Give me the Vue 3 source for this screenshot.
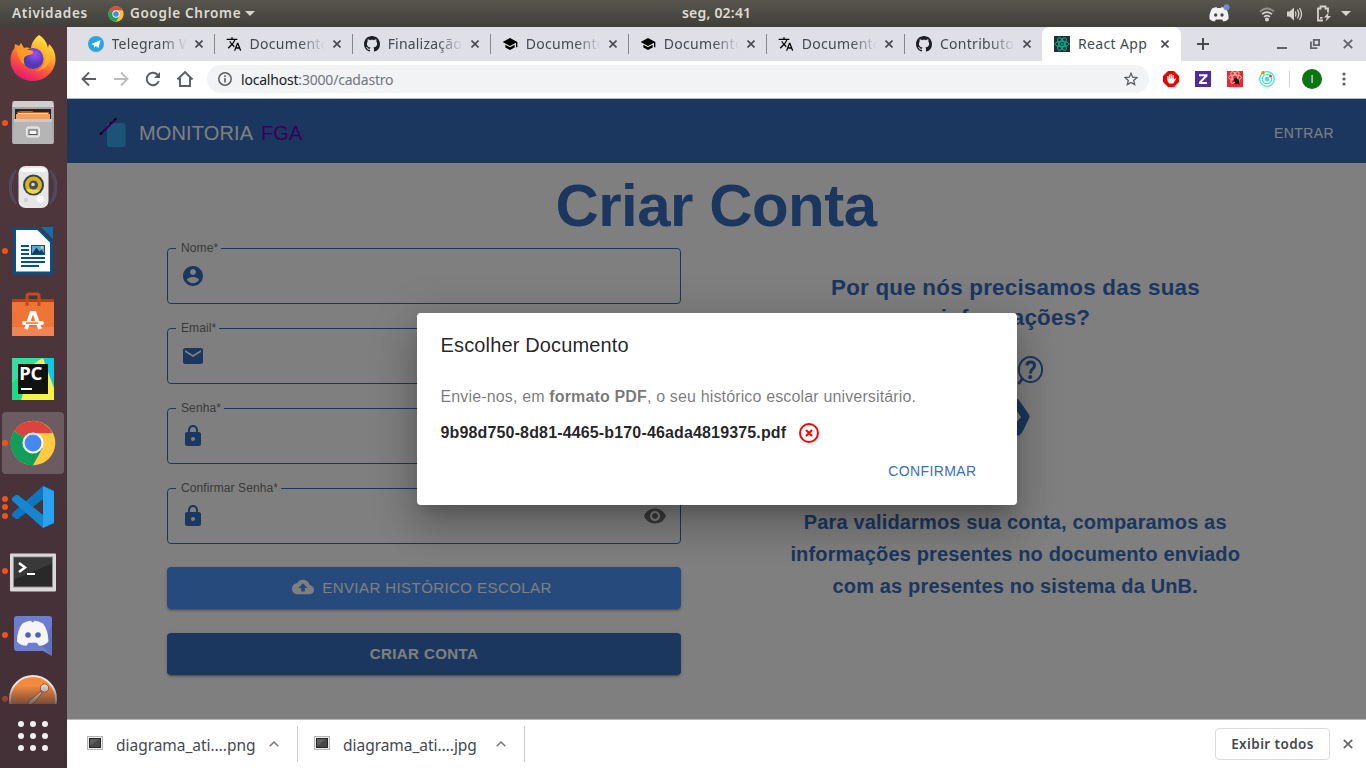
<script setup>
const tabs = [
  { title: 'Telegram Web', icon: 'telegram', spacing: '0.3px' },
  { title: 'Documentos', icon: 'translate', spacing: '0.3px' },
  { title: 'Finalização d', icon: 'github', spacing: '0.2px' },
  { title: 'Documentos', icon: 'school', spacing: '0.3px' },
  { title: 'Documentos', icon: 'school', spacing: '0.3px' },
  { title: 'Documentos', icon: 'translate', spacing: '0.3px' },
  { title: 'Contributors', icon: 'github', spacing: '0.3px' },
  { title: 'React App', icon: 'react', active: true, spacing: '0.35px' },
]

const dock = [
  { name: 'firefox', dots: 0 },
  { name: 'files', dots: 1 },
  { name: 'rhythmbox', dots: 0 },
  { name: 'writer', dots: 1 },
  { name: 'software', dots: 0 },
  { name: 'pycharm', dots: 0 },
  { name: 'chrome', dots: 1, active: true },
  { name: 'code', dots: 3 },
  { name: 'terminal', dots: 1 },
  { name: 'discord', dots: 1 },
  { name: 'postman', dots: 1, cut: true },
]

const fields = [
  { label: 'Nome*', icon: 'person' },
  { label: 'Email*', icon: 'mail' },
  { label: 'Senha*', icon: 'lock' },
  { label: 'Confirmar Senha*', icon: 'lock', eye: true },
]

const icons = {
  person: 'M12 2C6.48 2 2 6.48 2 12s4.48 10 10 10 10-4.48 10-10S17.52 2 12 2zm0 3c1.66 0 3 1.34 3 3s-1.34 3-3 3-3-1.34-3-3 1.34-3 3-3zm0 14.2c-2.5 0-4.71-1.28-6-3.22.03-1.99 4-3.08 6-3.08 1.99 0 5.97 1.09 6 3.08-1.29 1.94-3.5 3.22-6 3.22z',
  mail: 'M20 4H4c-1.1 0-1.99.9-1.99 2L2 18c0 1.100.9 2 2 2h16c1.100 0 2-.9 2-2V6c0-1.100-.9-2-2-2zm0 4l-8 5-8-5V6l8 5 8-5v2z',
  lock: 'M18 8h-1V6c0-2.760-2.240-5-5-5S7 3.240 7 6v2H6c-1.100 0-2 .9-2 2v10c0 1.100.9 2 2 2h12c1.100 0 2-.9 2-2V10c0-1.100-.9-2-2-2zm-6 9c-1.100 0-2-.9-2-2s.9-2 2-2 2 .9 2 2-.9 2-2 2zm3.100-9H8.900V6c0-1.710 1.390-3.100 3.100-3.100 1.710 0 3.100 1.390 3.100 3.100v2z',
  eye: 'M12 4.500C7 4.500 2.730 7.610 1 12c1.730 4.390 6 7.500 11 7.500s9.270-3.110 11-7.500c-1.730-4.390-6-7.500-11-7.500zM12 17c-2.760 0-5-2.240-5-5s2.240-5 5-5 5 2.240 5 5-2.240 5-5 5zm0-8c-1.660 0-3 1.340-3 3s1.340 3 3 3 3-1.340 3-3-1.340-3-3-3z',
  cloud: 'M19.350 10.040C18.670 6.590 15.640 4 12 4 9.110 4 6.600 5.640 5.350 8.040 2.340 8.360 0 10.910 0 14c0 3.310 2.690 6 6 6h13c2.760 0 5-2.240 5-5 0-2.640-2.050-4.780-4.650-4.960zM14 13v4h-4v-4H7l5-5 5 5h-3z',
  translate: 'M12.870 15.070l-2.540-2.510.030-.030c1.740-1.940 2.980-4.170 3.710-6.530H17V4h-7V2H8v2H1v1.990h11.170C11.500 7.920 10.440 9.750 9 11.350 8.070 10.320 7.300 9.190 6.690 8h-2c.730 1.630 1.730 3.170 2.980 4.560l-5.090 5.020L4 19l5-5 3.110 3.110.760-2.040zM18.500 10h-2L12 22h2l1.120-3h4.750L21 22h2l-4.500-12zm-2.620 7l1.620-4.330L19.120 17h-3.240z',
  school: 'M5 13.180v4L12 21l7-3.820v-4L12 17l-7-3.820zM12 3L1 9l11 6 9-4.910V17h2V9L12 3z',
  github: 'M8 0C3.580 0 0 3.580 0 8c0 3.540 2.290 6.530 5.470 7.590.4.070.55-.17.55-.38 0-.19-.01-.82-.01-1.490-2.010.37-2.530-.49-2.690-.94-.09-.23-.48-.94-.82-1.130-.28-.15-.68-.52-.01-.53.63-.01 1.080.58 1.230.82.72 1.210 1.870.87 2.330.66.07-.52.28-.87.51-1.070-1.780-.2-3.640-.89-3.640-3.950 0-.87.31-1.590.82-2.150-.08-.2-.36-1.020.08-2.120 0 0 .67-.21 2.200.82.64-.18 1.320-.27 2-.27s1.360.09 2 .27c1.530-1.040 2.200-.82 2.200-.82.44 1.100.16 1.920.08 2.120.51.56.82 1.270.82 2.150 0 3.070-1.870 3.750-3.650 3.950.29.25.54.73.54 1.480 0 1.070-.01 1.930-.01 2.200 0 .21.15.46.55.38A8.010 8.010 0 0 0 16 8c0-4.420-3.580-8-8-8z',
  discordFace: 'M14 12c3-2 6-3 8.500-3l.7 1.500h1.600L25.500 9c2.500 0 5.500 1 8.500 3 3 4.500 5 10.500 5 18-2.500 3-5.500 4.300-9 4.500l-2-3h-8l-2 3c-3.500-.2-6.500-1.500-9-4.500 0-7.500 2-13.500 5-18z',
}
</script>

<template>
  <div class="desktop">
    <header class="topbar">
      <span class="activities">Atividades</span>
      <div class="appmenu">
        <svg width="16" height="16" viewBox="0 0 48 48">
          <circle cx="24" cy="24" r="23" fill="#fbc02d" />
          <path d="M24 24L4 12.500A23 23 0 0 1 44 12.500H24z" fill="#dd4b3e" />
          <path d="M24 24L4 12.500A23 23 0 0 0 24 47L34 30z" fill="#1aa05a" />
          <circle cx="24" cy="24" r="11" fill="#fff" /><circle cx="24" cy="24" r="8.500" fill="#4688f1" />
        </svg>
        <span>Google Chrome</span>
        <i class="caret"></i>
      </div>
      <span class="clock">seg, 02:41</span>
      <div class="tray">
        <svg class="tray-discord" width="24" height="20" viewBox="0 0 24 20">
          <path d="M5 4.500Q8 3 9.500 3l.5 1h4l.5-1Q16 3 19 4.500q3 5 2.500 10.500-2 2-5 2.500l-1.500-2H9l-1.500 2q-3-.5-5-2.500Q2 9.500 5 4.500z" fill="#f2f2f2" />
          <circle cx="8.700" cy="11" r="1.700" fill="#4b4943" /><circle cx="15" cy="11" r="1.700" fill="#4b4943" />
          <circle cx="19.500" cy="3.200" r="3" fill="#7289da" />
        </svg>
        <svg class="tray-wifi" width="16" height="16" viewBox="0 0 16 16" fill="none" stroke="#d6d3cc" stroke-width="1.700">
          <path d="M1 5.500Q8-.5 15 5.500" opacity=".5" /><path d="M3 8.200Q8 4 13 8.200M5 10.900Q8 8.500 11 10.900" /><circle cx="8" cy="13.500" r="1.200" fill="#d6d3cc" />
        </svg>
        <svg class="tray-volume" width="16" height="16" viewBox="0 0 16 16" fill="none" stroke="#d6d3cc" stroke-width="1.300">
          <path d="M0 5.500h2.500L7 1.500v13l-4.500-4H0z" fill="#d6d3cc" stroke="none" /><path d="M8.300 5.500q1.500 2.500 0 5M10.400 3.700q2.700 4.300 0 8.600" /><path d="M12.500 2q4 6 0 12" />
        </svg>
        <svg class="tray-battery" width="16" height="17" viewBox="0 0 16 17" fill="none" stroke="#d6d3cc" stroke-width="1.800">
          <path d="M7 15.500H2V3.500H4.500V1.500h5v2h2.500v4M4 12.800h2.500" /><path d="M12.500 7.500l-4.500 5h3l-1.500 4 5.500-5.500h-3z" fill="#d6d3cc" stroke="none" />
        </svg>
        <i class="caret"></i>
      </div>
    </header>

    <aside class="dock">
      <div v-for="app in dock" :key="app.name" class="dock-item" :class="{ active: app.active, cut: app.cut }">
        <span class="dots"><i v-for="n in app.dots" :key="n"></i></span>
        <svg width="48" height="48" viewBox="0 0 48 48">
          <template v-if="app.name === 'firefox'">
            <defs>
              <linearGradient id="ffx" x1=".8" y1="0" x2=".3" y2="1"><stop offset="0" stop-color="#fff14a" /><stop offset=".35" stop-color="#ffb02e" /><stop offset=".65" stop-color="#ff5a36" /><stop offset="1" stop-color="#e3127c" /></linearGradient>
              <radialGradient id="ffp" cx=".6" cy=".3"><stop offset="0" stop-color="#a44cf4" /><stop offset="1" stop-color="#4b3bb5" /></radialGradient>
            </defs>
            <path d="M30 0c5 3 8 8 9 13l1-4c4 4 7 9 6.500 17A22.500 22.500 0 0 1 24 46C11 46 1.500 37 1.500 25c0-6 2-9 4-12l.5-4 4 2 2-3 3 5c4-1 5 0 7 1 0-6 4-11 8-14z" fill="url(#ffx)" />
            <circle cx="24" cy="23.500" r="10.500" fill="url(#ffp)" />
            <path d="M8 13c6 3 9 2 13 2 5 1 4 4-1 5-6 1-6 5-4 10-6-4-8-10-8-17z" fill="#ff9b24" />
            <path d="M30 12c6 3 8 8 6 14-1 5-5 9-10 10 8 0 14-5 15-12 1-7-4-14-8-16z" fill="#ffc32e" opacity=".65" />
          </template>
          <template v-else-if="app.name === 'files'">
            <rect x="3" y="2" width="42" height="43" rx="2" fill="#a6a6a6" /><path d="M5 2h38l2 6H3z" fill="#d0d0d0" />
            <rect x="6" y="10" width="36" height="11" fill="#242424" /><path d="M8 13l4-1h11l2 1h15v8H8z" fill="#cf5819" /><path d="M7 15h34v6H7z" fill="#f0a061" /><path d="M9 14.500h30" stroke="#fff" />
            <path d="M5 20h38l1 25H4z" fill="#b5b5b5" /><path d="M5 20h38v3H5z" fill="#c9c9c9" />
            <rect x="17.500" y="28" width="13" height="10" rx="2" fill="#d5d5d5" stroke="#eee" /><rect x="20" y="31" width="8" height="4.500" fill="#f5f5f5" stroke="#555" />
          </template>
          <template v-else-if="app.name === 'rhythmbox'">
            <path d="M7 7q-10 16 0 34M4 10q-7 13 0 28M41 7q10 16 0 34M44 10q7 13 0 28" fill="none" stroke="#5f6d9a" stroke-width="2" opacity=".35" />
            <rect x="9.500" y="3" width="30" height="42" rx="7" fill="#e6e6e6" /><path d="M13 5h23l1 4H12z" fill="#fafafa" />
            <circle cx="24.500" cy="22" r="10.500" fill="#3d4043" /><circle cx="24.500" cy="22" r="8.500" fill="#d4b323" /><path d="M17 26a8 8 0 0 0 14 1z" fill="#f0d653" /><circle cx="24.500" cy="22" r="4.500" fill="#4a4d50" /><circle cx="24" cy="21.500" r="1.800" fill="#d8d8d8" />
            <circle cx="31" cy="36" r="3.500" fill="#fbfbfb" /><rect x="15" y="35" width="4" height="4" rx="1" fill="#d2d2d2" />
          </template>
          <template v-else-if="app.name === 'writer'">
            <path d="M5 1.500h24L42.500 15v31H6.500Q5.500 46 5.500 45V2.500z" fill="#fff" stroke="#084f83" stroke-width="3" /><path d="M32 0h12v12z" fill="#0c70ac" />
            <path d="M12 19h8M12 23h8M12 27h8M12 31h24M12 35h24M12 39h18" stroke="#0b5187" stroke-width="2" />
            <rect x="22" y="18" width="14" height="10" fill="#5aa9dd" /><path d="M22.500 27.500l5-7 3 4 2-2 3.500 5z" fill="#103e5f" /><circle cx="33" cy="20.500" r="1.300" fill="#ffd43b" /><rect x="22.500" y="18.500" width="13" height="9" fill="none" stroke="#0b5187" />
          </template>
          <template v-else-if="app.name === 'software'">
            <g transform="translate(0 2)">
              <path d="M18 10V3q0-2 2-2h8q2 0 2 2v7" fill="none" stroke="#c6481e" stroke-width="3" /><path d="M3 6h42v8H3z" fill="#b63e16" /><path d="M3 9h42v34H3z" fill="#ee7438" /><path d="M3 34h42v9H3z" fill="#f38350" /><path d="M18 5v8M30 5v8" stroke="#c6481e" stroke-width="3" />
              <path d="M17 36l5.500-16h3L31 36" fill="none" stroke="#fff" stroke-width="3.800" /><path d="M15 30h18" stroke="#fff" stroke-width="4" stroke-linecap="round" /><path d="M17 30h12" stroke="#ec702f" stroke-width="1.500" />
            </g>
          </template>
          <template v-else-if="app.name === 'pycharm'">
            <rect x="3" y="3" width="42" height="42" fill="#21d789" /><path d="M32 3h13v32z" fill="#12c7de" /><path d="M24 8l10-5 11 30v12H12z" fill="#f5f04a" /><path d="M3 3h29L3 28z" fill="#35dda0" />
            <rect x="9" y="9" width="30" height="30" fill="#111" /><text x="10.200" y="25" class="pc-text">PC</text><path d="M12 34h11" stroke="#fff" stroke-width="2" />
          </template>
          <template v-else-if="app.name === 'chrome'">
            <circle cx="24" cy="24" r="22.300" fill="#fecb42" /><path d="M24 24L5 12A22.300 22.300 0 0 1 43.500 14H24z" fill="#da443c" /><path d="M24 24L5 12A22.300 22.300 0 0 0 24 46.300L33.500 29z" fill="#129d58" />
            <circle cx="24" cy="24" r="10.500" fill="#fff" /><circle cx="24" cy="24" r="8.500" fill="#4587f4" />
          </template>
          <template v-else-if="app.name === 'code'">
            <path d="M34 3L3 30.500V33l4 3h2L34 16z" fill="#0d76be" /><path d="M34 45L3 17.500V15l4-3h2l25 20z" fill="#1687cf" /><path d="M34 3l11 5v32l-11 5z" fill="#29a2ef" />
          </template>
          <template v-else-if="app.name === 'terminal'">
            <g transform="translate(0 1.500)">
              <rect x="1" y="5" width="46" height="38" rx="1" fill="#d9d9d9" /><rect x="4" y="8" width="40" height="31" fill="#909090" /><rect x="5" y="9" width="38" height="29" fill="#292929" /><path d="M5 9h38v6L5 31z" fill="#444" opacity=".6" />
              <path d="M10 14.500l6 4.500-6 4.500" fill="none" stroke="#fff" stroke-width="2.500" /><path d="M18 25.500h8" stroke="#fff" stroke-width="2" />
            </g>
          </template>
          <template v-else-if="app.name === 'discord'">
            <path d="M8 5h32q3 0 3 3v37l-9-5H8q-3 0-3-3V8q0-3 3-3z" fill="#6c7fcf" /><path d="M33 34l10-20v31z" fill="#5264b0" opacity=".5" />
            <path :d="icons.discordFace" transform="translate(-1.500 1) scale(1.05 .98)" fill="#f5f5f7" /><circle cx="19" cy="24" r="2.800" fill="#5063aa" /><circle cx="29" cy="24" r="2.800" fill="#5063aa" />
          </template>
          <template v-else>
            <circle cx="24" cy="24" r="23" fill="#f48a3d" stroke="#eee5dc" stroke-width="2" /><circle cx="35.500" cy="13" r="4.200" fill="#dcd5d0" stroke="#8d5a3a" /><path d="M32 16l-12 10-4 8 10-7 7-9z" fill="#e5d3c5" stroke="#935c37" />
          </template>
        </svg>
      </div>
      <div class="apps"><i v-for="n in 9" :key="n"></i></div>
    </aside>

    <main class="browser">
      <div class="tabstrip">
        <div v-for="(tab, i) in tabs" :key="i" class="tab" :class="{ selected: tab.active, nosep: i === 6 }">
          <svg v-if="tab.icon === 'telegram'" width="16" height="16" viewBox="0 0 16 16"><circle cx="8" cy="8" r="8" fill="#2ca5e0" /><path d="M3.200 8.300L12.500 4l-2 8-2.800-2-1.500 1.700-.3-2.700z" fill="#fff" /></svg>
          <svg v-else-if="tab.icon === 'react'" width="16" height="16" viewBox="0 0 16 16" fill="none" stroke="#06b78d">
            <rect width="16" height="16" fill="#262b35" stroke="none" /><ellipse cx="8" cy="8" rx="7" ry="2.700" /><ellipse cx="8" cy="8" rx="7" ry="2.700" transform="rotate(60 8 8)" /><ellipse cx="8" cy="8" rx="7" ry="2.700" transform="rotate(120 8 8)" /><circle cx="8" cy="8" r="1" />
          </svg>
          <svg v-else-if="tab.icon === 'github'" width="16" height="16" viewBox="0 0 16 16" fill="#1b1f23"><path :d="icons.github" /></svg>
          <svg v-else width="16" height="16" viewBox="0 0 24 24" fill="#000"><path :d="icons[tab.icon]" /></svg>
          <span class="tab-title" :style="{ letterSpacing: tab.spacing }">{{ tab.title }}</span>
          <svg class="tab-close" width="8" height="8" viewBox="0 0 8 8"><path d="M.5.5l7 7M7.500.5l-7 7" stroke="#45494d" stroke-width="1.600" /></svg>
        </div>
        <svg class="newtab" width="12" height="12" viewBox="0 0 12 12"><path d="M6 0v12M0 6h12" stroke="#45494d" stroke-width="2" /></svg>
        <div class="winctl">
          <svg width="10" height="10" viewBox="0 0 10 10"><path d="M0 9h10" stroke="#606367" stroke-width="2" /></svg>
          <svg width="10" height="10" viewBox="0 0 10 10" fill="none" stroke="#606367" stroke-width="1.800"><path d="M3.800.9h5.300v5.200H3.800zM.9 2.500v6.600h6.500" /></svg>
          <svg width="10" height="10" viewBox="0 0 10 10"><path d="M.8.8l8.400 8.400M9.200.8L.8 9.200" stroke="#606367" stroke-width="1.800" /></svg>
        </div>
      </div>

      <div class="toolbar">
        <span class="tool"><svg width="16" height="16" viewBox="0 0 16 16" fill="none" stroke="#5a5e62" stroke-width="1.800"><path d="M15 8H2M8 1.500L1.500 8 8 14.500" /></svg></span>
        <span class="tool"><svg width="16" height="16" viewBox="0 0 16 16" fill="none" stroke="#b9bbbd" stroke-width="1.800"><path d="M1 8h13M8 1.500L14.500 8 8 14.500" /></svg></span>
        <span class="tool"><svg width="16" height="16" viewBox="0 0 16 16" fill="none" stroke="#5a5e62" stroke-width="2"><path d="M13.800 10A6.200 6.200 0 1 1 12.500 3.700L14 5.500" /><path d="M15 1v6H9z" fill="#5a5e62" stroke="none" /></svg></span>
        <span class="tool"><svg width="18" height="18" viewBox="0 0 18 18" fill="none" stroke="#5a5e62" stroke-width="1.900"><path d="M1.500 9.500L9 2l7.500 7.500M4 8v8h10V8" /></svg></span>
        <div class="omnibox">
          <svg width="14" height="14" viewBox="0 0 14 14" fill="none" stroke="#5a5e62" stroke-width="1.500"><circle cx="7" cy="7" r="6.200" /><path d="M7 6v4.500M7 3.300v1.600" stroke-width="1.600" /></svg>
          <span class="url">localhost<em>:3000/cadastro</em></span>
          <svg class="star" width="14" height="14" viewBox="0 0 14 14" fill="none" stroke="#5a5e62" stroke-width="1.300"><path d="M7 1.300l1.700 3.900 4.200.4-3.200 2.800 1 4.200L7 10.400l-3.700 2.200 1-4.200L1.100 5.600l4.200-.4z" /></svg>
        </div>
        <span class="tool first"><svg width="16" height="16" viewBox="0 0 16 16"><path d="M5 0h6l5 5v6l-5 5H5l-5-5V5z" fill="#f20000" /><path d="M4.800 9V5M6.600 8V3.500M8.400 8V3M10.200 8V4" stroke="#fff" stroke-width="1.300" fill="none" /><path d="M4.200 7.500h6.600v1.200l1.400-1.500 1 .6-3 4.700H6q-1.800-1.800-1.800-5z" fill="#fff" /></svg></span>
        <span class="tool"><svg width="16" height="16" viewBox="0 0 16 16"><rect width="16" height="16" fill="#4b2da1" /><path d="M4 4.200h7.500v.6L5 11.400v.6h7" fill="none" stroke="#fff" stroke-width="2" /></svg></span>
        <span class="tool"><svg width="16" height="16" viewBox="0 0 16 16" fill="none" stroke="#f9b9ba"><rect width="16" height="16" fill="#e9292d" stroke="none" /><ellipse cx="8" cy="6.500" rx="6.500" ry="2.500" /><ellipse cx="8" cy="6.500" rx="6.500" ry="2.500" transform="rotate(60 8 6.500)" /><ellipse cx="8" cy="6.500" rx="6.500" ry="2.500" transform="rotate(120 8 6.500)" /><ellipse cx="9.500" cy="10" rx="2.200" ry="3.500" transform="rotate(-35 9.500 10)" fill="#1a1415" stroke="none" /><path d="M6 10l6-2M7 13l5-3M9 7l3 7" stroke="#2c1718" stroke-width=".8" /></svg></span>
        <span class="tool"><svg width="16" height="16" viewBox="0 0 16 16" fill="none" stroke="#37eac5" stroke-width="1.300"><circle cx="8" cy="8" r="7.300" /><circle cx="8" cy="8" r="4.700" /><circle cx="8" cy="8" r="2.300" fill="#37eac5" stroke="none" /><circle cx="4" cy="1.800" r="1.700" fill="#ff7a1c" stroke="none" /><circle cx="11.500" cy="5" r="1.500" fill="#f3473a" stroke="none" /></svg></span>
        <i class="divider"></i>
        <span class="tool"><b class="avatar">I</b></span>
        <span class="tool"><svg width="4" height="14" viewBox="0 0 4 14" fill="#5a5e62"><circle cx="2" cy="2" r="1.600" /><circle cx="2" cy="7" r="1.600" /><circle cx="2" cy="12" r="1.600" /></svg></span>
      </div>

      <section class="page">
        <nav class="appbar">
          <svg width="30" height="32" viewBox="0 0 30 32"><rect x="8" y="8" width="18.500" height="24" rx="2" fill="#37a6f3" /><path d="M1.500 19L17 4" stroke="#6c009d" stroke-width="2" /><path d="M1 19.500l2-2M12 8.500l-1-1M15 5l2.500-1.500" stroke="#100418" stroke-width="2" /></svg>
          <span class="brand">MONITORIA <b>FGA</b></span>
          <span class="enter">ENTRAR</span>
        </nav>
        <h1>Criar Conta</h1>
        <div class="columns">
          <form class="form" @submit.prevent>
            <fieldset v-for="f in fields" :key="f.label">
              <legend>{{ f.label }}</legend>
              <div class="inner">
                <svg width="24" height="24" viewBox="0 0 24 24" fill="#366fbf"><path :d="icons[f.icon]" /></svg>
                <svg v-if="f.eye" width="24" height="24" viewBox="0 0 24 24" fill="#757575"><path :d="icons.eye" /></svg>
              </div>
            </fieldset>
            <button class="btn upload"><svg width="22" height="22" viewBox="0 0 24 24" fill="#fff"><path :d="icons.cloud" /></svg>ENVIAR HISTÓRICO ESCOLAR</button>
            <button class="btn create">CRIAR CONTA</button>
          </form>
          <div class="info">
            <h2>Por que nós precisamos das suas<br />informações?</h2>
            <svg class="person" width="60" height="88" viewBox="0 0 60 88">
              <g fill="none" stroke="#366fbf"><ellipse cx="45.500" cy="17.500" rx="11.600" ry="12.500" stroke-width="2" /><path d="M33.500 32l4-5.500" stroke-width="2.800" /><path d="M42 13.500q0-3.500 3.700-3.500 3.800 0 3.800 3.500 0 2-2 3.500t-2 4.500" stroke-width="3" /></g>
              <circle cx="45.200" cy="25" r="2.100" fill="#366fbf" />
              <path d="M31 46l2.500 1.500L44 62.500q1 2.500 0 4L38 79q-2 3-4 4.500h-3V71l5-6-5-7z" fill="#366fbf" />
            </svg>
            <p>Para validarmos sua conta, comparamos as<br />informações presentes no documento enviado<br />com as presentes no sistema da UnB.</p>
          </div>
        </div>
        <div class="backdrop">
          <div class="dialog">
            <h3>Escolher Documento</h3>
            <p class="hint">Envie-nos, em <b>formato PDF</b>, o seu histórico escolar universitário.</p>
            <div class="file">
              <b>9b98d750-8d81-4465-b170-46ada4819375.pdf</b>
              <svg width="20" height="20" viewBox="0 0 20 20" fill="none" stroke="#f00"><circle cx="10" cy="10" r="9" stroke-width="2" /><path d="M7 7l6 6M13 7l-6 6" stroke-width="2" /></svg>
            </div>
            <div class="actions"><span>CONFIRMAR</span></div>
          </div>
        </div>
      </section>

      <footer class="downloads">
        <div v-for="ext in ['png', 'jpg']" :key="ext" class="download">
          <svg width="16" height="14" viewBox="0 0 16 14"><rect x=".5" y=".5" width="15" height="13" fill="#eee" stroke="#b4b4b4" /><rect x="2" y="2" width="12" height="10" fill="#252525" /><path d="M3 3h10v8H3z" fill="#484848" /><path d="M3 3h9L3 10z" fill="#606060" /></svg>
          <span class="fname">diagrama_ati….{{ ext }}</span>
          <svg class="chev" width="10" height="6" viewBox="0 0 10 6"><path d="M.7 5.300L5 1l4.300 4.300" fill="none" stroke="#777" stroke-width="1.500" /></svg>
        </div>
        <span class="showall">Exibir todos</span>
        <svg class="bar-close" width="10" height="10" viewBox="0 0 10 10"><path d="M.8.8l8.400 8.400M9.200.8L.8 9.200" stroke="#606367" stroke-width="1.700" /></svg>
      </footer>
    </main>
  </div>
</template>

<style>
body { margin: 0; overflow: hidden; }
</style>

<style scoped>
* { box-sizing: border-box; }
svg { display: block; flex: none; }
.desktop { width: 1366px; height: 768px; display: grid; grid-template: 27px 741px / 67px 1299px; overflow: hidden; font-family: "Noto Sans", sans-serif; }
.topbar { grid-column: 1 / 3; display: grid; grid-template-columns: 108px 574px 525px 159px; align-items: center; background: linear-gradient(#58564d, #3f3e39); color: #dfdbd2; font-size: 14px; font-weight: 600; line-height: 26px; white-space: nowrap; }
.activities { padding-left: 12px; font-size: 13.500px; letter-spacing: .7px; }
.appmenu { display: flex; align-items: center; gap: 6px; font-size: 13.500px; letter-spacing: .7px; }
.caret { width: 0; height: 0; border: 5px solid transparent; border-top-color: #d6d3cc; border-bottom: 0; }
.appmenu .caret { margin-left: -2px; }
.clock { font-size: 14px; letter-spacing: .2px; }
.topbar > span, .appmenu > span { margin-top: -1px; }
.tray { display: flex; align-items: center; }
.tray-wifi { margin-left: 28px; }
.tray-volume { margin-left: 12px; }
.tray-battery { margin-left: 13px; }
.tray .caret { margin-left: 9px; }

.dock { display: flex; flex-direction: column; background: linear-gradient(#51383b, #4a353b 40%, #432f36); overflow: hidden; }
.dock-item { position: relative; height: 64px; flex: none; display: flex; align-items: center; padding-left: 9px; }
.dock-item.active::before { content: ""; position: absolute; left: 2px; top: 1px; width: 62px; height: 62px; border-radius: 4px; background: rgba(255, 255, 255, .2); }
.dock-item svg { position: relative; }
.dock-item.cut { height: 37px; align-items: flex-start; padding-top: 8px; overflow: hidden; -webkit-mask: linear-gradient(#000 50%, rgba(0, 0, 0, .3)); mask: linear-gradient(#000 50%, rgba(0, 0, 0, .3)); }
.dots { position: absolute; left: 2px; top: 0; height: 64px; display: flex; flex-direction: column; justify-content: center; gap: 2.500px; }
.dots i { width: 6px; height: 6px; border-radius: 50%; background: #e95420; }
.apps { display: grid; grid-template: repeat(3, 6px) / repeat(3, 6px); gap: 6px; padding: 17px 0 0 18px; }
.apps i { border-radius: 50%; background: #f1eff0; }

.browser { display: flex; flex-direction: column; background: #fff; min-width: 0; }
.tabstrip { height: 34px; flex: none; display: flex; align-items: center; background: #dee0e6; padding-left: 8.500px; }
.tab { width: 138.070px; height: 34px; flex: none; display: flex; align-items: center; padding-left: 12px; position: relative; color: #45494d; }
.tab::after { content: ""; position: absolute; right: -1px; top: 7px; height: 20px; width: 1px; background: #85888c; }
.tab.nosep::after, .tab.selected::after { display: none; }
.tab.selected { background: #fff; width: 139px; border-radius: 8px 8px 0 0; }
.tab-title { width: 76px; margin-left: 8px; overflow: hidden; white-space: nowrap; font-size: 14px; line-height: 20px; -webkit-mask: linear-gradient(90deg, #000 65%, transparent 99%); mask: linear-gradient(90deg, #000 65%, transparent 99%); }
.selected .tab-title { -webkit-mask: none; mask: none; }
.tab-close { margin-left: 7px; }
.newtab { margin-left: 16px; }
.winctl { margin: 0 13px 0 auto; display: flex; gap: 23px; }
.toolbar { height: 38px; flex: none; display: flex; align-items: center; padding: 0 6px 1px; border-bottom: 1px solid #b6b4b6; }
.tool { width: 32px; display: flex; justify-content: center; }
.omnibox { width: 942px; height: 28px; margin-left: 6px; border-radius: 14px; background: #f1f3f4; display: flex; align-items: center; padding: 0 11px; }
.url { margin-left: 9px; font-size: 14px; color: #202124; letter-spacing: -.2px; }
.url em { font-style: normal; color: #72767a; }
.star { margin-left: auto; }
.tool.first { margin-left: 6px; }
.divider { width: 1px; height: 16px; margin: 0 6px; background: #ccced1; }
.avatar { width: 20px; height: 20px; border-radius: 50%; background: #0b7512; color: #dfeee0; font: 11px/20px "Liberation Sans", sans-serif; text-align: center; }

.page { position: relative; height: 620px; flex: none; background: #fff; font-family: "Liberation Sans", Arial, sans-serif; color: #366fbf; overflow: hidden; }
.appbar { height: 64px; display: flex; align-items: center; padding: 0 32px; background: #366fbf; color: #fff; }
.brand { margin-left: 10px; padding-top: 3px; font-size: 20px; line-height: 32px; letter-spacing: .15px; word-spacing: 3px; }
.brand b { font-weight: 400; color: #7500b0; }
.enter { margin-left: auto; padding-top: 4px; font-size: 14px; letter-spacing: .4px; }
h1 { margin: 7px 0 1px; padding-right: 1px; font-size: 60px; line-height: 72px; letter-spacing: -.5px; text-align: center; }
.columns { display: flex; padding-left: 100px; }
.form { width: 514px; flex: none; }
fieldset { height: 61px; margin: 0 0 19px; padding: 0 13px 0 8px; border: 1px solid #366fbf; border-radius: 4px; min-width: 0; }
legend { height: 11px; padding: 0 3px 0 5px; color: #757575; font-size: 12px; line-height: 11px; letter-spacing: .11px; }
.inner { display: flex; justify-content: space-between; padding: 10px 0 0 5px; }
.btn { width: 514px; height: 42px; display: flex; align-items: center; justify-content: center; gap: 8px; margin: 0 0 24px; padding: 0 0 2px; border: 0; border-radius: 4px; color: #fff; font: 15px "Liberation Sans", Arial, sans-serif; letter-spacing: .43px; box-shadow: 0 3px 1px -2px rgba(0, 0, 0, .2), 0 2px 2px rgba(0, 0, 0, .14), 0 1px 5px rgba(0, 0, 0, .12); }
.upload { background: #4c94f8; margin-top: 23px; padding-right: 4px; }
.create { background: #366fbf; font-weight: 700; }
.info { width: 500px; margin-left: 84px; text-align: center; }
h2 { margin: 30px 0 0; padding-left: 1px; font-size: 22.400px; line-height: 30px; letter-spacing: .22px; }
.person { margin: 19px auto 66px; }
.info p { margin: 0; padding-left: .5px; font-size: 20px; font-weight: 700; line-height: 32px; letter-spacing: .15px; }
.backdrop { position: absolute; inset: 0; display: flex; align-items: center; justify-content: center; background: rgba(0, 0, 0, .5); }
.dialog { width: 600px; height: 192px; padding: 16px 24px; border-radius: 4px; background: #fff; color: rgba(0, 0, 0, .87); box-shadow: 0 11px 15px -7px rgba(0, 0, 0, .2), 0 24px 38px 3px rgba(0, 0, 0, .14), 0 9px 46px 8px rgba(0, 0, 0, .12); }
h3 { margin: 0 0 24px; font-size: 20px; font-weight: 400; line-height: 32px; letter-spacing: .15px; }
.hint { margin: 0 0 12px; color: rgba(0, 0, 0, .54); font-size: 16px; line-height: 24px; letter-spacing: .15px; white-space: nowrap; }
.file { display: flex; align-items: center; gap: 12.500px; font-size: 16px; line-height: 24px; letter-spacing: .15px; }
.actions { display: flex; justify-content: flex-end; padding: 16px 16px 0 0; font-size: 14px; line-height: 20px; letter-spacing: .4px; color: #366fbf; }

.downloads { height: 49px; display: flex; align-items: center; border-top: 1px solid #b5b5b5; background: #fff; color: #45494d; }
.download { width: 227px; height: 36px; display: flex; align-items: center; border-right: 1px solid #ccc; padding-left: 16px; }
.download:first-child { width: 231px; padding-left: 20px; }
.fname { width: 139px; margin-left: 13px; font-size: 15.500px; white-space: nowrap; letter-spacing: -.03px; padding-top: 2px; }
.download > svg:first-child { margin-top: -2px; }
.chev { margin-left: 14px; }
.showall { width: 115px; height: 32px; margin-left: auto; border: 1px solid #dadce0; border-radius: 4px; text-align: center; font-size: 13.500px; font-weight: 600; line-height: 30px; letter-spacing: .4px; }
.bar-close { margin: 0 13px; }
.pc-text { font: 700 18.500px "Noto Sans", sans-serif; fill: #fff; letter-spacing: -.2px; }
</style>
